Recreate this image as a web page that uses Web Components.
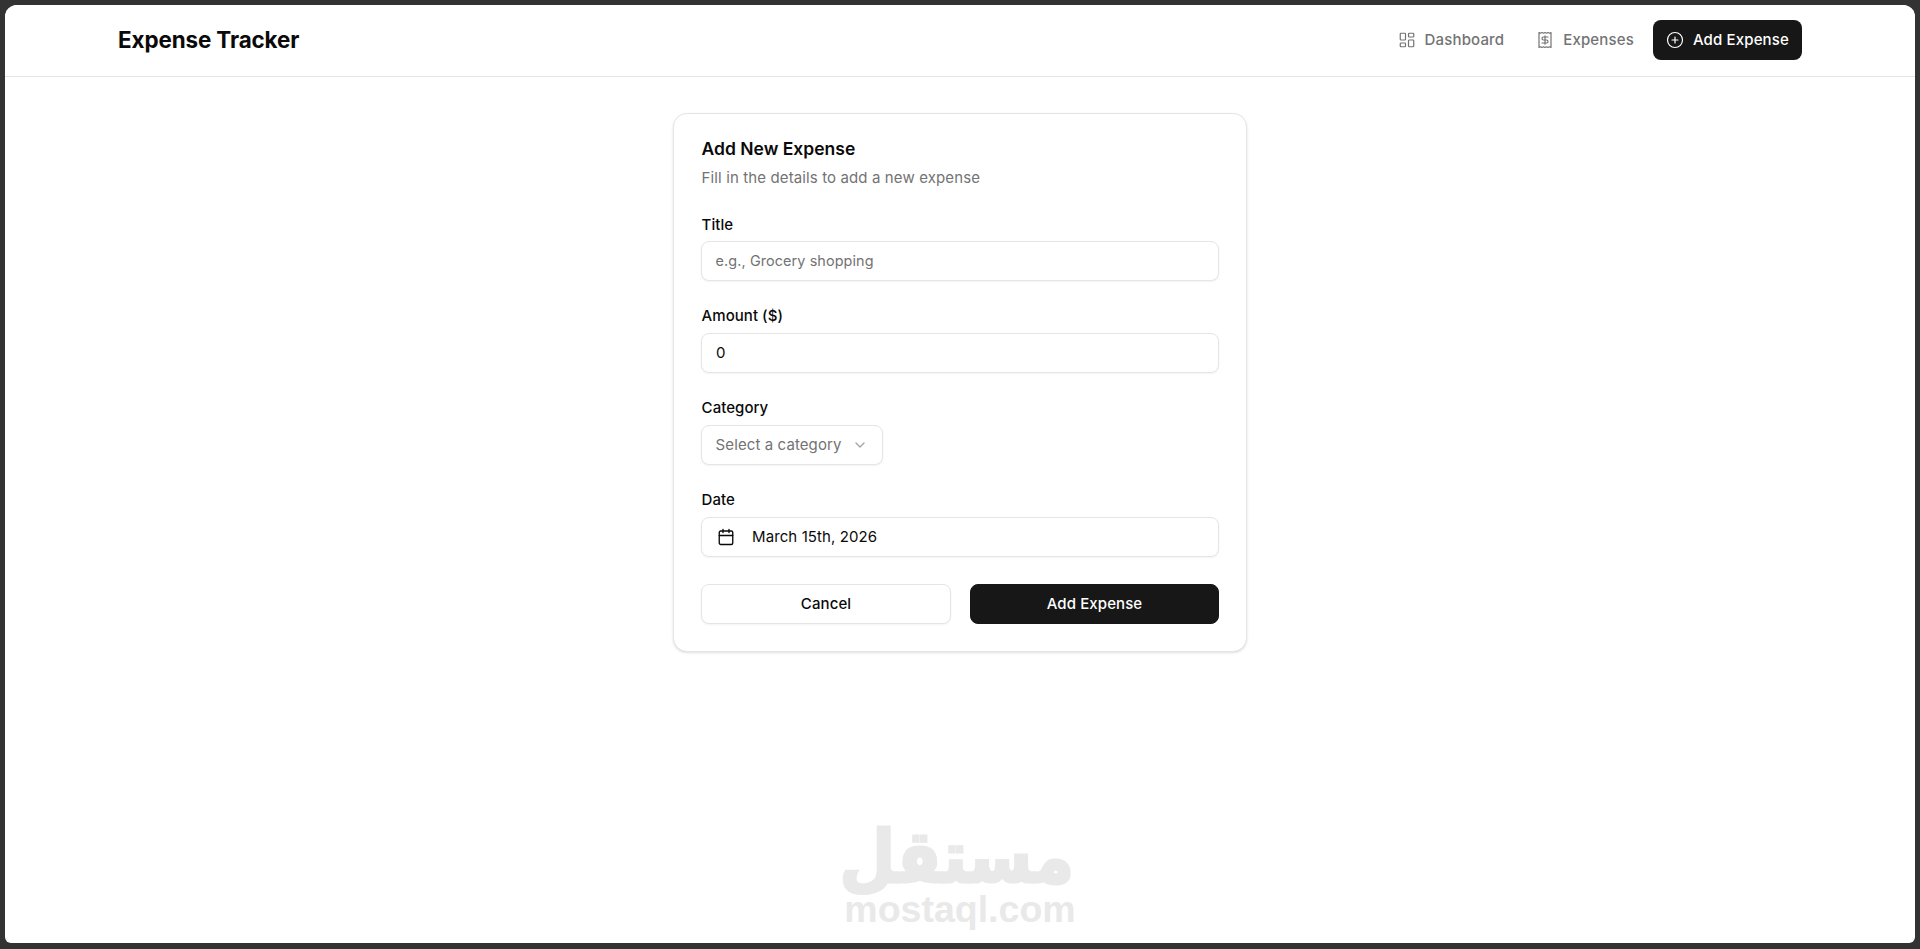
<!DOCTYPE html>
<html lang="en"><head><meta charset="utf-8"><title>Expense Tracker</title>
<style>
html,body{margin:0;height:100%;background:#333;overflow:hidden}
body{font-family:Inter,"Liberation Sans",sans-serif;color:#0a0a0a}
</style></head><body>
<app-frame>
  <app-header>
    <nav-link><svg slot="icon" viewBox="0 0 24 24"><rect x="3" y="3" width="7" height="9" rx="1"/><rect x="14" y="3" width="7" height="5" rx="1"/><rect x="14" y="12" width="7" height="9" rx="1"/><rect x="3" y="16" width="7" height="5" rx="1"/></svg>Dashboard</nav-link>
    <nav-link><svg slot="icon" viewBox="0 0 24 24"><path d="M4 2v20l2-1 2 1 2-1 2 1 2-1 2 1 2-1 2 1V2l-2 1-2-1-2 1-2-1-2 1-2-1-2 1Z"/><path d="M16 8h-6a2 2 0 1 0 0 4h4a2 2 0 1 1 0 4H8"/><path d="M12 17.5v-11"/></svg>Expenses</nav-link>
    <nav-link active><svg slot="icon" viewBox="0 0 24 24"><circle cx="12" cy="12" r="10"/><path d="M8 12h8M12 8v8"/></svg>Add Expense</nav-link>
  </app-header>
  <form-card>
    <form-field first label="Title"><text-box placeholder>e.g., Grocery shopping</text-box></form-field>
    <form-field label="Amount ($)"><text-box>0</text-box></form-field>
    <form-field label="Category"><select-box>Select a category</select-box></form-field>
    <form-field label="Date"><text-box dated>March 15th, 2026</text-box></form-field>
    <action-row>
      <action-button>Cancel</action-button>
      <action-button primary>Add Expense</action-button>
    </action-row>
  </form-card>
  <water-mark></water-mark>
</app-frame>
<script>
function def(name, html){
  customElements.define(name, class extends HTMLElement{
    constructor(){super();this.attachShadow({mode:'open'}).innerHTML=typeof html==='function'?html(this):html;}
  });
}
const F='Inter,"Liberation Sans",sans-serif';
def('app-frame',`<style>
:host{display:block;position:relative;box-sizing:border-box;margin:5px 5px 0 5px;height:938px;background:#fff;border-radius:12px 12px 6px 6px;overflow:hidden}
</style><slot></slot>`);
def('app-header',`<style>
:host{display:flex;align-items:center;justify-content:space-between;box-sizing:border-box;height:72px;padding:0 113px 1px 113px;border-bottom:1px solid #e5e5e5;background:#fff}
h1{margin:0 0 1px;font:700 22.4px/28px ${F};color:#0a0a0a;letter-spacing:-.1px}
nav{display:flex;gap:4px;align-items:center}
</style><h1>Expense Tracker</h1><nav><slot></slot></nav>`);
def('nav-link',`<style>
:host{display:inline-flex;align-items:center;gap:9px;height:40px;padding:0 14px;border-radius:8px;font:500 15px/20px ${F};letter-spacing:.15px;color:#737373;white-space:nowrap}
:host([active]){background:#171717;color:#fff;padding:0 13px 0 13px;margin-left:1px}
::slotted(svg){width:18px;height:18px;fill:none;stroke:currentColor;stroke-width:1.6;stroke-linecap:round;stroke-linejoin:round;flex:none}
</style><slot name="icon"></slot><slot></slot>`);
def('form-card',`<style>
:host{display:block;box-sizing:border-box;width:574px;height:539px;margin:36px auto 0;padding:0 27px;background:#fff;border:1px solid #e5e5e5;border-radius:14px;box-shadow:0 1px 3px rgba(0,0,0,.1),0 1px 2px -1px rgba(0,0,0,.1)}
h2{margin:0;padding:25px 0 0 .6px;font:600 17.5px/20px ${F};color:#0a0a0a}
p{margin:9px 0 27px;padding-left:.6px;font:400 15px/20px ${F};letter-spacing:.12px;color:#737373}
</style><h2>Add New Expense</h2><p>Fill in the details to add a new expense</p><slot></slot>`);
def('form-field',h=>`<style>
:host{display:block;margin-bottom:25px}
label{display:block;padding-left:.6px;font:500 15px/20px ${F};letter-spacing:.05px;color:#0a0a0a;margin-bottom:7px}
:host([first]) label{margin-bottom:6px}
</style><label>${h.getAttribute('label')}</label><slot></slot>`);
def('text-box',`<style>
:host{display:flex;align-items:center;box-sizing:border-box;height:40px;padding:0 13px 1px 14px;border:1px solid #e5e5e5;border-radius:8px;background:#fff;box-shadow:0 1px 2px rgba(0,0,0,.05);font:400 15px/20px ${F};letter-spacing:.1px;color:#0a0a0a}
:host([placeholder]){color:#737373;font-size:14.4px;padding-left:13.6px}
svg{display:none;width:18px;height:18px;margin:0 17px 0 1px;fill:none;stroke:currentColor;stroke-width:1.8;stroke-linecap:round;stroke-linejoin:round}
:host([dated]) svg{display:block}
</style><svg viewBox="0 0 24 24"><path d="M8 2v4M16 2v4"/><rect x="3" y="4" width="18" height="18" rx="2"/><path d="M3 10h18"/></svg><slot></slot>`);
def('select-box',`<style>
:host{display:inline-flex;align-items:center;justify-content:space-between;box-sizing:border-box;width:182px;height:40px;padding:0 14px 0 13.6px;border:1px solid #e5e5e5;border-radius:8px;background:#fff;box-shadow:0 1px 2px rgba(0,0,0,.05);font:400 15px/20px ${F};letter-spacing:.1px;color:#737373;vertical-align:top;white-space:nowrap}
svg{width:16px;height:16px;fill:none;stroke:#a3a3a3;stroke-width:2;stroke-linecap:round;stroke-linejoin:round}
</style><slot></slot><svg viewBox="0 0 24 24"><path d="m6 9 6 6 6-6"/></svg>`);
def('action-row',`<style>
:host{display:grid;grid-template-columns:250px 249px;gap:19px;padding-top:2px}
</style><slot></slot>`);
def('action-button',`<style>
:host{display:flex;align-items:center;justify-content:center;box-sizing:border-box;height:40px;border:1px solid #e5e5e5;border-radius:8px;background:#fff;box-shadow:0 1px 2px rgba(0,0,0,.05);font:500 15px/20px ${F};letter-spacing:.1px;color:#0a0a0a}
:host([primary]){background:#171717;border-color:#171717;color:#fff;box-shadow:none}
</style><slot></slot>`);
def('water-mark',`<style>
:host{position:absolute;left:839px;top:819px;width:232px;text-align:center;color:#e9e9e9;pointer-events:none}
.ar{font:700 72px/66px "DejaVu Sans",sans-serif;direction:rtl;display:block;width:256px;margin-left:-12px;height:67px;white-space:nowrap;transform:scaleX(.89);-webkit-text-stroke:3px #e9e9e9;paint-order:stroke}
.en{font:700 37.5px/36px "Liberation Sans",sans-serif;display:block}
</style><span class="ar" lang="ar">مستقل</span><span class="en">mostaql.com</span>`);
</script>
</body></html>
